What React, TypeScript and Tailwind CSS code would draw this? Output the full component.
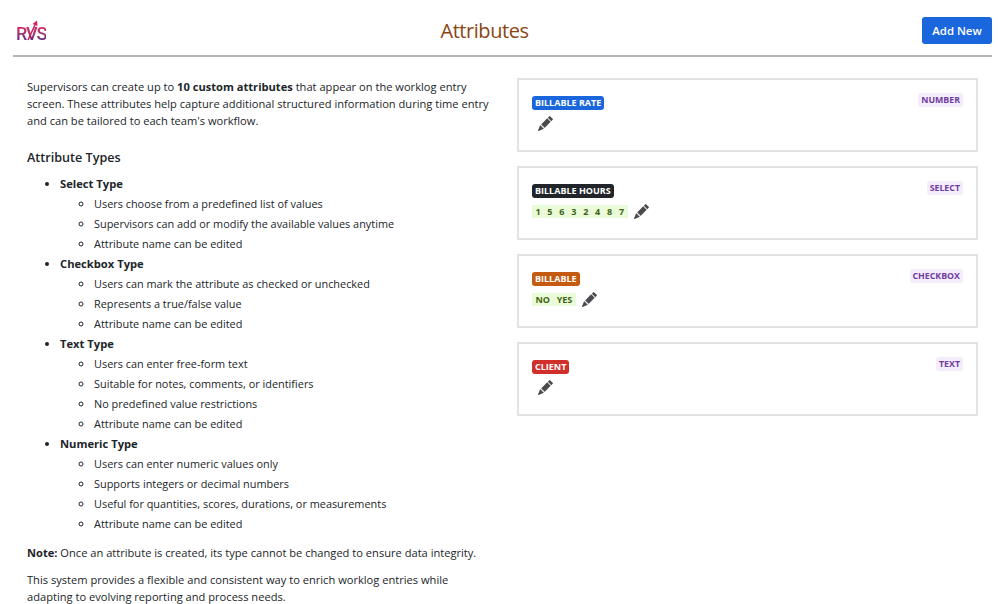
import React from "react";
import { BsPencilFill } from "react-icons/bs";

const sections = [
  { title: "Select Type", items: ["Users choose from a predefined list of values", "Supervisors can add or modify the available values anytime", "Attribute name can be edited"] },
  { title: "Checkbox Type", items: ["Users can mark the attribute as checked or unchecked", "Represents a true/false value", "Attribute name can be edited"] },
  { title: "Text Type", items: ["Users can enter free-form text", "Suitable for notes, comments, or identifiers", "No predefined value restrictions", "Attribute name can be edited"] },
  { title: "Numeric Type", items: ["Users can enter numeric values only", "Supports integers or decimal numbers", "Useful for quantities, scores, durations, or measurements", "Attribute name can be edited"] },
];

const cards = [
  { name: "BILLABLE RATE", bg: "bg-[#1a66dc]", type: "NUMBER", values: [] as string[] },
  { name: "BILLABLE HOURS", bg: "bg-[#212529]", type: "SELECT", values: ["1", "5", "6", "3", "2", "4", "8", "7"] },
  { name: "BILLABLE", bg: "bg-[#c55a11]", type: "CHECKBOX", values: ["NO", "YES"] },
  { name: "CLIENT", bg: "bg-[#d02f2a]", type: "TEXT", values: [] as string[] },
];

function Logo() {
  return (
    <div className="relative w-[32px] h-[22px] mt-[7px] ml-[3px]">
      <span className="absolute left-0 top-[6px] font-['Roboto'] text-[18px] leading-[16px] tracking-[-1.1px] font-medium bg-gradient-to-b from-[#e01e5a] to-[#5b2a86] bg-clip-text text-transparent">RVS</span>
      <svg className="absolute left-0 top-0" width="32" height="22" viewBox="0 0 32 22" fill="none">
        <path d="M12 20 L19 5" stroke="#c8205f" strokeWidth="1.6" />
        <path d="M21 0.5 L16.5 4 L21.5 6 Z" fill="#d61f5e" />
      </svg>
    </div>
  );
}

export default function App() {
  return (
    <div className="w-[998px] h-[604px] overflow-hidden bg-white text-[#212529] font-['Open_Sans','Noto_Sans',sans-serif]">
      <header className="mx-[13px] w-[979px] h-[57px] border-b-2 border-[#b5b5b5] flex items-center justify-between">
        <div className="w-[34px]"><Logo /></div>
        <h1 className="text-[20px] leading-[28px] text-[#8b4513] mt-[7px] tracking-[-0.45px]">Attributes</h1>
        <button className="w-[70px] h-[27px] mt-[6px] rounded-[3px] bg-[#1a66dc] text-white text-[11.4px] font-semibold">Add New</button>
      </header>
      <main className="flex pl-[27px] pt-[21px]">
        <section className="w-[490px] text-[10.9px] leading-[20px]">
          <p className="w-[470px] text-[11.12px] leading-[17px]">
            Supervisors can create up to <b className="font-bold">10 custom attributes</b> that appear on the worklog entry screen. These attributes help capture additional structured information during time entry and can be tailored to each team's workflow.
          </p>
          <h2 className="text-[12.6px] leading-[20px] font-semibold mt-[19px] mb-[6px]">Attribute Types</h2>
          <ul className="list-disc pl-[33px]">
            {sections.map((s) => (
              <li key={s.title}>
                <span className="font-bold text-[11.2px]">{s.title}</span>
                <ul className="list-[circle] pl-[34px]">
                  {s.items.map((i, n) => <li key={n}>{i}</li>)}
                </ul>
              </li>
            ))}
          </ul>
          <p className="mt-[9px] text-[11.12px]"><b className="font-bold">Note:</b> Once an attribute is created, its type cannot be changed to ensure data integrity.</p>
          <p className="mt-[8px] w-[440px] text-[11.12px] leading-[17px]">This system provides a flexible and consistent way to enrich worklog entries while adapting to evolving reporting and process needs.</p>
        </section>
        <section className="w-[461px] flex flex-col gap-[14px]">
          {cards.map((c) => (
            <div key={c.name} className="h-[74px] border-2 border-[#e2e2e2] pl-[13px] pr-[13px] pt-[16px] flex justify-between items-start">
              <div>
                <span className={`block w-fit ${c.bg} text-white text-[9px] leading-[13.5px] font-bold px-[3px] rounded-[3px]`}>{c.name}</span>
                <div className="flex items-center h-[16px] mt-[5.5px]">
                  {c.values.map((v) => (
                    <span key={v} className="bg-[#eafbd9] text-[#3f6212] text-[9px] leading-[13px] font-bold px-[3.4px]">{v}</span>
                  ))}
                  <BsPencilFill className="text-[#4b4b4f] text-[15px] ml-[6px]" />
                </div>
              </div>
              <span className="bg-[#f5ecfb] text-[#6f3d9e] text-[8.8px] leading-[14px] font-bold px-[3px] rounded-[3px] -mt-[3px]">{c.type}</span>
            </div>
          ))}
        </section>
      </main>
    </div>
  );
}
